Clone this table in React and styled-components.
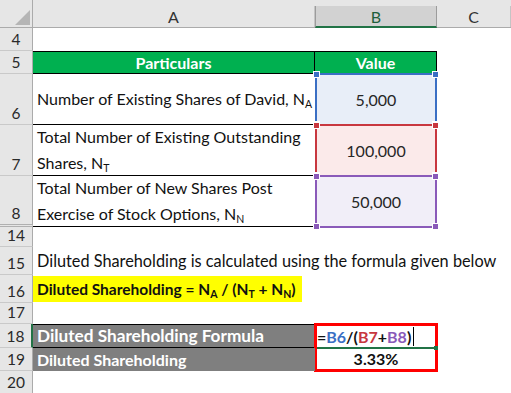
import React from "react";
import styled, { createGlobalStyle, css } from "styled-components";

const Global = createGlobalStyle`
  html, body { margin: 0; padding: 0; background: #ffffff; }
  body { font-family: Lato, "Noto Sans", sans-serif; }
  * { box-sizing: border-box; }
`;

const FONT = `Lato, "Noto Sans", sans-serif`;

const Sheet = styled.div`
  display: grid;
  grid-template-columns: 33px 282px 122px 74px;
  grid-template-rows: 28px 23px 23px 51px 51px 51px 20px 28px 28px 21px 24px 23px 23px;
  width: 511px;
  height: 393px;
  overflow: hidden;
  font-family: ${FONT};
  font-size: 16px;
  color: #111;
  background: #fff;
`;

const Corner = styled.div`
  background: #e6e6e6;
  border-right: 1px solid #ababab;
  border-bottom: 1px solid #ababab;
  position: relative;
  svg { position: absolute; left: 0; top: 0; }
`;

const ColHeader = styled.div`
  background: #e6e6e6;
  padding-top: 6px;
  border-bottom: 1px solid #ababab;
  display: flex;
`;

const ColLabel = styled.div`
  flex: 1;
  display: flex;
  align-items: center;
  justify-content: center;
  font-size: 16px;
  color: #333;
  border-right: 1px solid ${(p) => (p.$active ? "#9c9c9c" : "#c4c4c4")};
  ${(p) =>
    p.$active &&
    css`
      background: #d2d2d2;
      color: #1f5f3c;
      border-left: 1px solid #9c9c9c;
      border-bottom: 2px solid #217346;
      margin-bottom: -1px;
    `}
`;

const RowHeader = styled.div`
  background: #e6e6e6;
  border-right: ${(p) => (p.$active ? "2px solid #217346" : "1px solid #ababab")};
  border-bottom: ${(p) => (p.$hidden ? "3px double #b0b0b0" : "1px solid #c9c9c9")};
  display: flex;
  align-items: flex-end;
  justify-content: center;
  padding-bottom: 1px;
  font-size: 15.5px;
  color: #2a2a2a;
  line-height: 20px;
`;

const Cell = styled.div`
  position: relative;
  display: flex;
  align-items: center;
  justify-content: ${(p) => (p.$center ? "center" : "flex-start")};
  padding: 0 4px;
  white-space: nowrap;
  line-height: 26px;
  background: ${(p) => p.$fill || "transparent"};
  color: ${(p) => p.$color || "#111"};
  font-weight: ${(p) => (p.$bold ? 700 : 400)};
  font-size: ${(p) => p.$size || "16px"};
  grid-column: ${(p) => p.$span || "auto"};
  ${(p) => p.$bt && css`border-top: 1px solid #000;`}
  ${(p) => p.$bb && css`border-bottom: 1px solid #000;`}
  ${(p) => p.$br && css`border-right: 1px solid #000;`}
`;

const RangeBox = styled.div`
  position: absolute;
  left: 0;
  right: 0;
  top: -1px;
  bottom: -1px;
  border: 2px solid ${(p) => p.$c};
  pointer-events: none;
`;

const Handle = styled.span`
  position: absolute;
  width: 7px;
  height: 7px;
  background: ${(p) => p.$c};
  border: 1px solid #fff;
  ${(p) => (p.$top ? "top: -4px;" : "bottom: -4px;")}
  ${(p) => (p.$left ? "left: -4px;" : "right: -4px;")}
`;

const Value = styled.span`
  color: #262626;
`;

const Sub = styled.sub`
  font-size: 10.5px;
  vertical-align: -3px;
  line-height: 0;
`;

const Highlight = styled.span`
  display: inline-block;
  background: #ffff00;
  font-weight: 700;
  font-size: 15.5px;
  line-height: 26px;
  margin-left: -4px;
  padding: 0 6px 0 4px;
`;

const ResultBox = styled.div`
  grid-column: 3;
  grid-row: span 2;
  margin: -1px;
  border: 3px solid #ff0000;
  display: grid;
  grid-template-rows: 23px 1fr;
  position: relative;
  font-weight: 700;
`;

const FormulaLine = styled.div`
  display: flex;
  align-items: center;
  border-bottom: 2px solid #217346;
  margin-right: -1px;
  position: relative;
  line-height: 20px;
`;

const FillHandle = styled.span`
  position: absolute;
  right: -2px;
  bottom: -3px;
  width: 4px;
  height: 4px;
  background: #217346;
`;

const Ref = styled.span`
  color: ${(p) => p.$c};
`;

const Caret = styled.span`
  display: inline-block;
  width: 1px;
  height: 19px;
  background: #000;
  margin-left: 2px;
`;

const ResultValue = styled.div`
  display: flex;
  align-items: center;
  justify-content: center;
  line-height: 20px;
`;

function Range({ c }) {
  return (
    <RangeBox $c={c}>
      <Handle $c={c} $top $left />
      <Handle $c={c} $top />
      <Handle $c={c} $left />
      <Handle $c={c} />
    </RangeBox>
  );
}

export default function App() {
  return (
    <>
      <Global />
      <Sheet>
        <Corner>
          <svg width="33" height="28" viewBox="0 0 33 28">
            <polygon points="30,10 30,25 15,25" fill="#b5b5b5" />
          </svg>
        </Corner>
        <ColHeader><ColLabel>A</ColLabel></ColHeader>
        <ColHeader><ColLabel $active>B</ColLabel></ColHeader>
        <ColHeader><ColLabel>C</ColLabel></ColHeader>

        <RowHeader>4</RowHeader>
        <Cell $span="span 3" />

        <RowHeader>5</RowHeader>
        <Cell $fill="#00b050" $color="#fff" $bold $center $bt $bb $br>Particulars</Cell>
        <Cell $fill="#00b050" $color="#fff" $bold $center $bt $bb $br>Value</Cell>
        <Cell />

        <RowHeader>6</RowHeader>
        <Cell $bb>
          <span>Number of Existing Shares of David, N<Sub>A</Sub></span>
        </Cell>
        <Cell $center $fill="#e8eef8">
          <Value>5,000</Value>
          <Range c="#3a6fc4" />
        </Cell>
        <Cell />

        <RowHeader>7</RowHeader>
        <Cell $bb>
          <div>
            Total Number of Existing Outstanding
            <br />
            Shares, N<Sub>T</Sub>
          </div>
        </Cell>
        <Cell $center $fill="#fbeaea">
          <Value>100,000</Value>
          <Range c="#c8373f" />
        </Cell>
        <Cell />

        <RowHeader $hidden>8</RowHeader>
        <Cell $bb>
          <div>
            Total Number of New Shares Post
            <br />
            Exercise of Stock Options, N<Sub>N</Sub>
          </div>
        </Cell>
        <Cell $center $fill="#f1eef8">
          <Value>50,000</Value>
          <Range c="#8a5ab9" />
        </Cell>
        <Cell />

        <RowHeader>14</RowHeader>
        <Cell $span="span 3" />

        <RowHeader>15</RowHeader>
        <Cell $span="span 3" $size="16.3px">
          Diluted Shareholding is calculated using the formula given below
        </Cell>

        <RowHeader>16</RowHeader>
        <Cell $span="span 3">
          <Highlight>
            Diluted Shareholding = N<Sub>A</Sub> / (N<Sub>T</Sub> + N<Sub>N</Sub>)
          </Highlight>
        </Cell>

        <RowHeader>17</RowHeader>
        <Cell $span="span 3" />

        <RowHeader $active>18</RowHeader>
        <Cell $fill="#7f7f7f" $color="#fff" $bold $bt $bb $size="17.2px">
          Diluted Shareholding Formula
        </Cell>
        <ResultBox>
          <FormulaLine>
            <span>=</span>
            <Ref $c="#3a6fc4">B6</Ref>
            <span>/(</span>
            <Ref $c="#c8373f">B7</Ref>
            <span>+</span>
            <Ref $c="#8a5ab9">B8</Ref>
            <span>)</span>
            <Caret />
            <FillHandle />
          </FormulaLine>
          <ResultValue>3.33%</ResultValue>
        </ResultBox>
        <Cell />

        <RowHeader>19</RowHeader>
        <Cell $fill="#7f7f7f" $color="#fff" $bold $size="16px">Diluted Shareholding</Cell>
        <Cell $span="4" />

        <RowHeader>20</RowHeader>
        <Cell $span="span 3" />
      </Sheet>
    </>
  );
}
